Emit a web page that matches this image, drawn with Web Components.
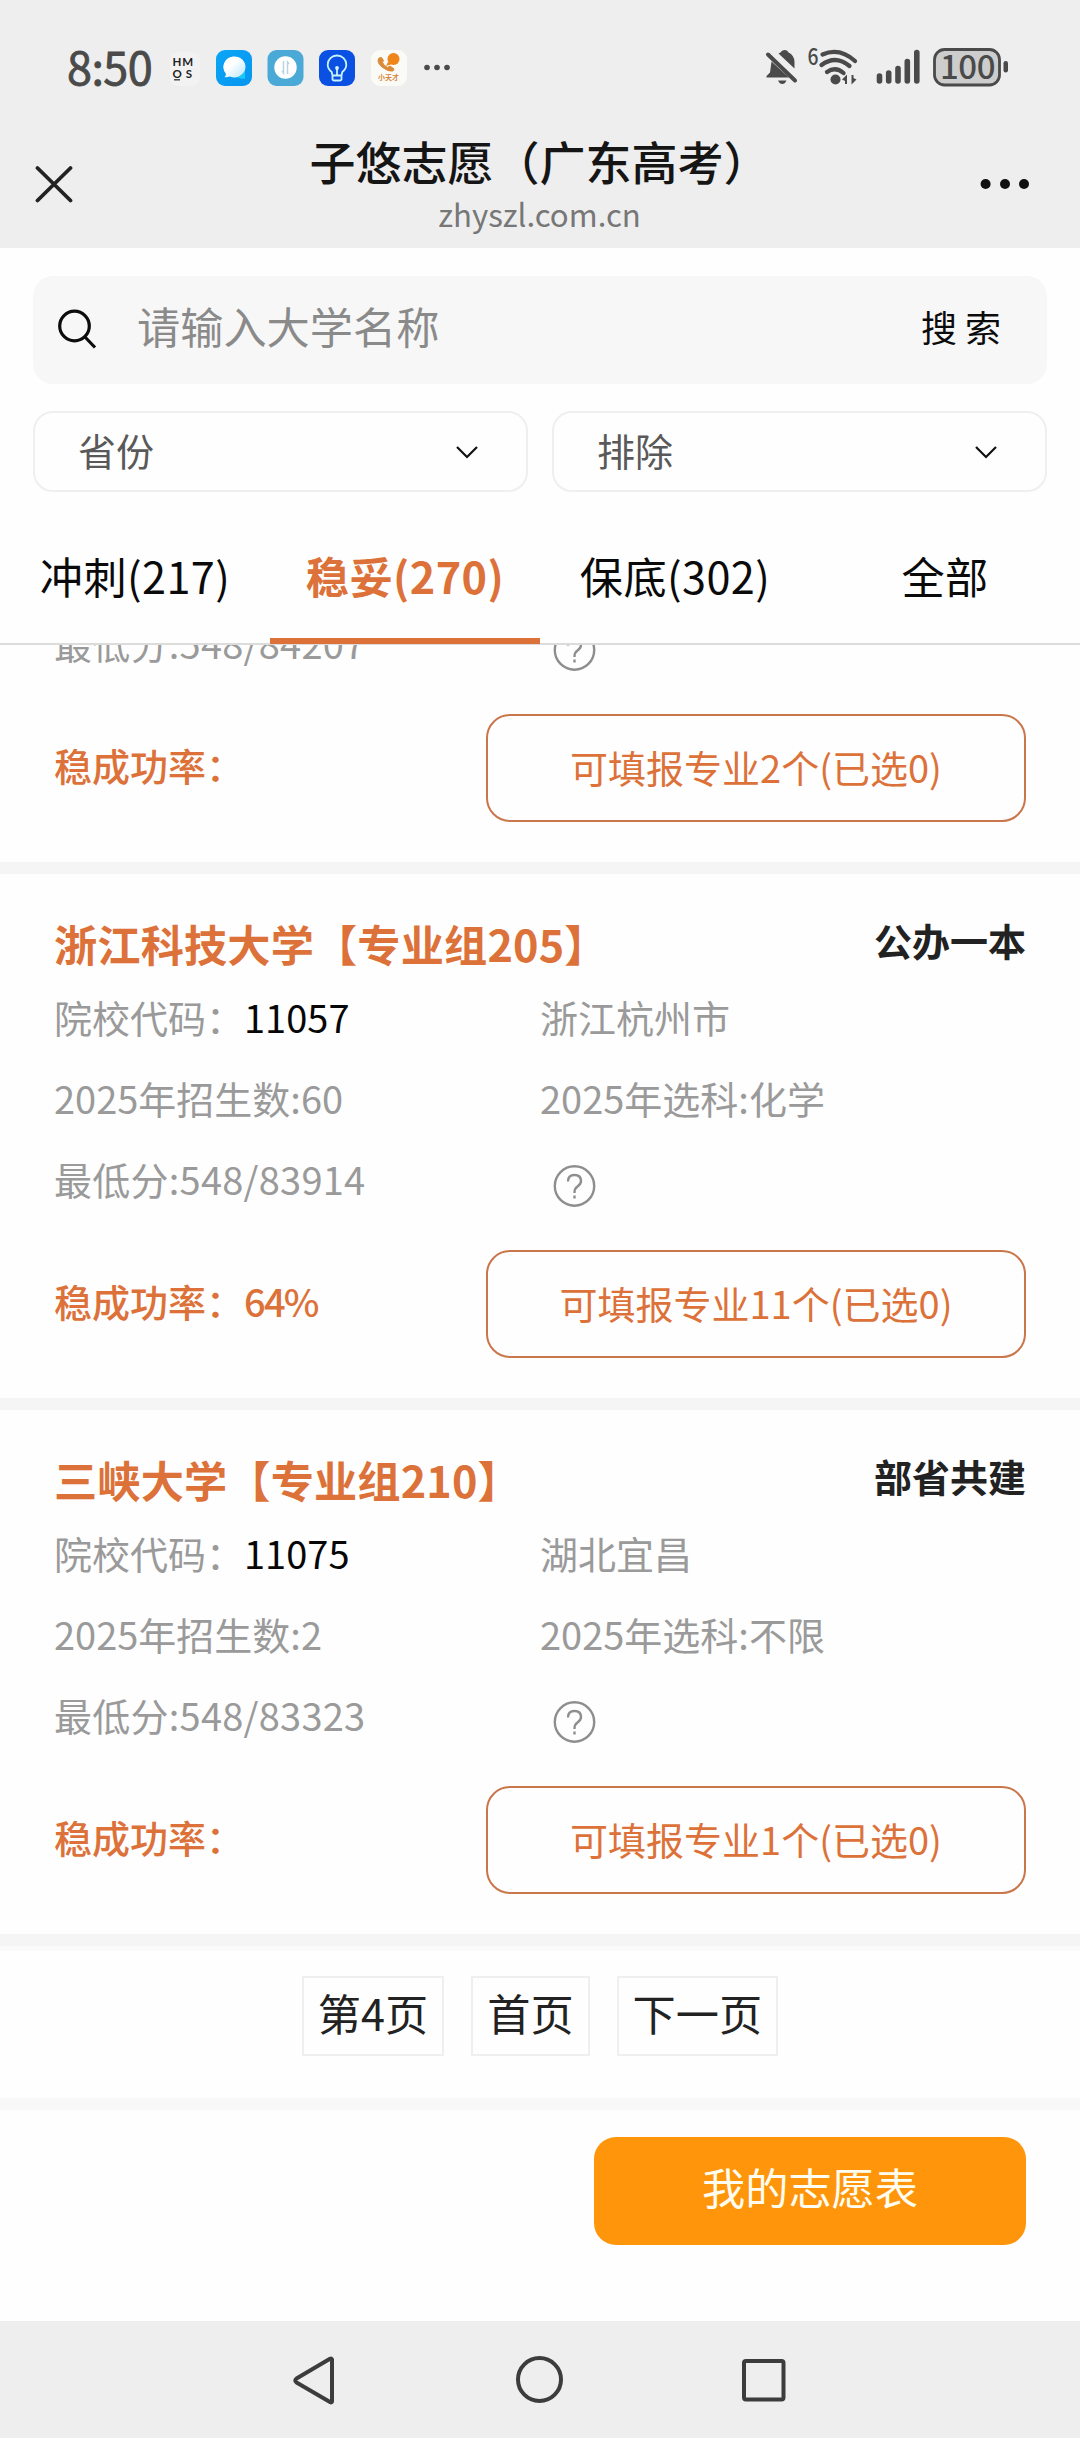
<!DOCTYPE html>
<html lang="zh-CN">
<head>
<meta charset="utf-8">
<title>子悠志愿（广东高考）</title>
<style>
  html, body { margin: 0; padding: 0; }
  body {
    width: 1080px; height: 2438px; overflow: hidden; background: #fefefe;
    font-family: "Noto Sans CJK SC", sans-serif;
    --orange: #dc7239; --edge: #c9764b;
  }
</style>
</head>
<body>
<volunteer-app></volunteer-app>

<script>
const define = (name, html, setup) => {
  const tpl = document.createElement('template');
  tpl.innerHTML = html;
  customElements.define(name, class extends HTMLElement {
    constructor() {
      super();
      this.attachShadow({ mode: 'open' }).append(tpl.content.cloneNode(true));
    }
    connectedCallback() { if (setup) setup(this, this.shadowRoot); }
  });
};

define('status-bar', `
<style>
  :host { display: flex; align-items: center; height: 136px; box-sizing: border-box; padding: 0 72px 0 67px; color: #4a4a4a; }
  .time { font-size: 45px; line-height: 60px; width: 103px; font-weight: 400; -webkit-text-stroke: .8px #4a4a4a; letter-spacing: -.6px; white-space: nowrap; padding-bottom: 5px; }
  svg { display: block; flex: none; overflow: visible; }
  .grow { flex: 1; }
  text { font-family: "Noto Sans CJK SC", sans-serif; }
</style>
<div class="time">8:50</div>
<svg width="290" height="48" viewBox="170 44 290 48">
  <rect x="170" y="52" width="30" height="34" rx="8" fill="#f2f2f2"/>
  <g font-size="11.500" font-weight="700" fill="#222" style="font-family:Lato,sans-serif">
    <text x="172.500" y="66" style="font-family:Lato,sans-serif" textLength="20.500">HM</text>
    <text x="172.500" y="77.800" style="font-family:Lato,sans-serif" textLength="19.500">OS</text>
  </g>
  <path d="M174 79.800h6" stroke="#333" stroke-width="1.300"/>
  <defs>
    <linearGradient id="g" x1="0" y1="0" x2="1" y2="1"><stop offset="0" stop-color="#0aa5f7"/><stop offset="1" stop-color="#0796ee"/></linearGradient>
    <linearGradient id="w" x1="0" y1="0" x2="1" y2="1"><stop offset=".4" stop-color="#fff"/><stop offset="1" stop-color="#b6e6fb"/></linearGradient>
  </defs>
  <rect x="216" y="50" width="36" height="36" rx="9" fill="url(#g)"/>
  <path d="M236 77q8-1 9-8v9.500q-4 1-9-1.500z" fill="#17c9f5"/>
  <path d="M233 56.500a11 10.500 0 1 1 -3 20q-3 1-5.500 .6q2-1.500 1.300-3.600a11 10.500 0 0 1 7.200-17z" fill="url(#w)"/>
  <rect x="267.500" y="50" width="36" height="36" rx="9" fill="#4aa9d6"/>
  <circle cx="285.500" cy="67.500" r="11.200" fill="#fff"/>
  <path d="M283.500 61v12l-1.500-2M287.500 74V62l1.500 2" fill="none" stroke="#b9d4df" stroke-width="1.500"/>
  <rect x="319" y="50" width="36" height="36" rx="9" fill="#0a50e2"/>
  <path d="M332.500 75.500l-.8-3.500q-4-3.200-4-7.500a9.300 9 0 0 1 18.600 0q0 4.300-4 7.500l-.8 3.500zM332.500 76v3.500q.5 1 1.500 1h6q1 0 1.500-1V76M337 75v-8" fill="none" stroke="#c9f2ff" stroke-width="1.800" stroke-linejoin="round"/>
  <circle cx="337" cy="68" r="1.900" fill="#d9f6ff"/>
  <rect x="371" y="50" width="36" height="36" rx="9" fill="#fafaf6"/>
  <circle cx="393.500" cy="59" r="6" fill="#f08519"/>
  <path d="M388 62l-2 4 6-2z" fill="#f08519"/>
  <path d="M379 58q-3 4 3 9t11 4l1-2-4-3-2.500 1.500q-4-2-5-5l1-2-2-3z" fill="#db8a3a" stroke="#db8a3a" stroke-width="1"/>
  <text x="388.500" y="80.300" font-size="7" font-weight="700" text-anchor="middle" fill="#d9863c">小天才</text>
  <g fill="#4a4a4a"><circle cx="427" cy="67.500" r="2.800"/><circle cx="437" cy="67.500" r="2.800"/><circle cx="447" cy="67.500" r="2.800"/></g>
</svg>
<div class="grow"></div>
<svg width="246" height="48" viewBox="762 44 246 48" fill="#4a4a4a">
  <path d="M771.500 61.500L789 77.500H766.500v-1.500l3.500-3.500zM778.500 53.500l2-1q1-2.500 4-2.500 3 0 3.800 2.300 6.200 3.200 6.200 9.700v6.500zM778 80.500h8.500q-1.500 3.500-4.200 3.500t-4.300-3.500z"/>
  <path d="M768 54.500l27 26" stroke="#4a4a4a" stroke-width="4" stroke-linecap="round"/>
  <text x="807.500" y="65" font-size="23" font-weight="500" textLength="11" lengthAdjust="spacingAndGlyphs">6</text>
  <g fill="none" stroke="#4a4a4a" stroke-width="4.300" stroke-linecap="round">
    <path d="M822.500 54.500q17-7.500 32.500 6.500"/><path d="M821.500 65q14-10.500 28 1"/><path d="M827 72q8.500-6 16.500 1"/>
  </g>
  <circle cx="835.500" cy="79.500" r="5"/>
  <path d="M842 79.500l5-5v9.500h-2v-3zM856.500 79.500l-5 5V75h2v3z"/>
  <g stroke="#4a4a4a" stroke-width="5.600" stroke-linecap="round"><path d="M879.500 76v5M888.700 73v8M898 68.500v12.500M907.300 61.500V81M916.800 52.500V81"/></g>
  <rect x="934.500" y="49.500" width="65" height="35.500" rx="10" fill="#cdcdcd" stroke="#4a4a4a" stroke-width="2.800"/>
  <text x="967.500" y="79" font-size="33" font-weight="500" text-anchor="middle" letter-spacing="-.5">100</text>
  <rect x="1003.500" y="61" width="4.500" height="11.500" rx="2.200"/>
</svg>`);

define('page-header', `
<style>
  :host { display: flex; align-items: flex-start; justify-content: space-between; height: 112px; padding: 0 36px 0 35px; box-sizing: border-box; }
  .mid { display: flex; flex-direction: column; align-items: center; }
  h1 { margin: -3px 0 0; font-size: 46px; font-weight: 500; line-height: 54px; color: #151515; height: 57px; white-space: nowrap; }
  p { margin: 0; font-size: 31.200px; line-height: 48px; color: #777; }
  svg { display: block; }
</style>
<svg width="64" height="112" viewBox="35 136 64 112"><path d="M37.500 168l33 32.500M70.500 168l-33 32.500" stroke="#222" stroke-width="3.800" stroke-linecap="round"/></svg>
<div class="mid"><h1><slot name="title"></slot></h1><p><slot name="host"></slot></p></div>
<svg width="64" height="112" viewBox="980 136 64 112" fill="#111"><circle cx="985.600" cy="184" r="5"/><circle cx="1005" cy="184" r="5"/><circle cx="1024" cy="184" r="5"/></svg>`);

define('search-box', `
<style>
  :host { display: flex; align-items: center; height: 108px; border-radius: 20px; background: #f7f7f7; padding: 0 46px 0 25px; box-sizing: border-box; }
  svg { display: block; margin-right: 40px; }
  .ph { flex: 1; font-size: 43.200px; line-height: 60px; color: #8a8a8a; padding-bottom: 10px; }
  .go { font-size: 36px; letter-spacing: 8px; margin-right: -8px; color: #0c0c0c; line-height: 60px; padding-bottom: 9px; }
</style>
<svg width="39" height="44" viewBox="58 308 39 44"><g fill="none" stroke="#0c0c0c" stroke-width="3.200"><circle cx="74.500" cy="326" r="14.800"/><path d="M85 337l10 10.500"/></g></svg>
<div class="ph"><slot></slot></div><div class="go">搜索</div>`);

define('select-box', `
<style>
  :host { display: flex; flex: 1; align-items: center; justify-content: space-between; height: 81px; box-sizing: border-box; border: 2px solid #efefef; border-radius: 20px; padding: 0 47px 0 43px; font-size: 38px; line-height: 56px; color: #595959; }
  span { padding-bottom: 3px; }
</style>
<span><slot></slot></span>
<svg width="24" height="16" viewBox="0 0 24 16"><path d="M2 3l10 10 10-10" fill="none" stroke="#111" stroke-width="2.200"/></svg>`);

define('tab-bar', `
<style>
  :host { display: flex; height: 133px; box-sizing: border-box; border-bottom: 2px solid #dcdcda; }
</style><slot></slot>`);

define('tab-item', `
<style>
  :host { flex: 1; display: flex; justify-content: center; height: 132px; box-sizing: border-box; padding-top: 34px; font-size: 43.200px; letter-spacing: .4px; line-height: 58px; color: #0a0a0a; border-bottom: 6px solid transparent; }
  :host([active]) { color: var(--orange); font-weight: 700; border-bottom-color: var(--orange); }
</style><slot></slot>`);

define('college-card', `
<style>
  :host { display: block; padding: 39px 54px 40px; border-bottom: 12px solid #f5f5f5; font-size: 38px; color: #9a9a9a; }
  :host(:not([name])) { padding-top: 0; margin-top: -43px; }
  .head { display: flex; justify-content: space-between; height: 63px; line-height: 60px; font-weight: 700; }
  .name { font-size: 43.200px; letter-spacing: .15px; color: var(--orange); white-space: nowrap; }
  .tag { color: #222; line-height: 54px; }
  .row { display: grid; grid-template-columns: 486px 1fr; height: 81px; line-height: 81px; white-space: nowrap; }
  .row b { font-weight: 400; color: #060606; }
  .row .score { letter-spacing: .25px; }
  .row svg { display: block; margin: 26px 0 0 13px; }
  .foot { display: flex; align-items: center; justify-content: space-between; margin-top: 31px; color: var(--orange); }
  .rate { font-weight: 500; line-height: 56px; padding-bottom: 6px; }
  .rate i { font-style: normal; letter-spacing: -1.800px; }
  .btn { width: 540px; height: 108px; box-sizing: border-box; border: 2px solid var(--edge); border-radius: 24px; text-align: center; line-height: 102px; }
</style>
<div class="head"><span class="name"></span><span class="tag"></span></div>
<div class="row opt"><span>院校代码：<b class="code"></b></span><span class="place"></span></div>
<div class="row opt"><span class="plan"></span><span class="subject"></span></div>
<div class="row"><span class="score"></span><svg width="44" height="44" viewBox="0 0 44 44" fill="none" stroke="#8e8e8e" stroke-width="2.400"><circle cx="21.500" cy="22" r="19.700"/><path d="M15 17.500q0-6.500 6.500-6.500t6.500 6q0 3-3.500 5.500-3 2-3 6v.5"/><path d="M21.500 31.500v3"/></svg></div>
<div class="foot"><span class="rate">稳成功率：<i class="percent"></i></span><span class="btn"></span></div>`,
(el, root) => {
  const put = (cls, text) => { root.querySelector('.' + cls).textContent = text; };
  const at = k => el.getAttribute(k) || '';
  put('score', '最低分:' + at('score'));
  put('percent', at('rate'));
  put('btn', `可填报专业${at('majors')}个(已选0)`);
  if (!el.hasAttribute('name')) {
    root.querySelectorAll('.head, .opt').forEach(n => n.remove());
    return;
  }
  put('name', at('name'));
  put('tag', at('tag'));
  put('code', at('code'));
  put('place', at('place'));
  put('plan', '2025年招生数:' + at('plan'));
  put('subject', '2025年选科:' + at('subject'));
});

define('page-button', `
<style>
  :host { display: block; height: 80px; box-sizing: border-box; border: 2px solid #efefef; padding: 0 14px; font-size: 43.200px; line-height: 69px; color: #222; white-space: nowrap; }
</style><slot></slot>`);

define('page-nav', `
<style>
  :host { display: flex; justify-content: center; gap: 27px; height: 164px; box-sizing: border-box; padding-top: 25px; border-top: 5px solid #fafafa; border-bottom: 12px solid #f8f8f8; }
</style><slot></slot>`);

define('bottom-action', `
<style>
  :host { display: flex; justify-content: flex-end; height: 211px; box-sizing: border-box; padding: 27px 54px 0; }
  div { width: 432px; height: 108px; border-radius: 22px; background: #ff950a; color: #fffdf0; font-size: 43.200px; line-height: 98px; text-align: center; }
</style><div><slot></slot></div>`);

define('system-nav', `
<style>
  :host { display: flex; justify-content: center; height: 117px; background: #eee; }
  svg { display: block; }
</style>
<svg width="500" height="117" viewBox="290 2321 500 117" fill="none" stroke="#3c3c3c" stroke-width="4" stroke-linejoin="round">
  <path d="M332 2359.500v42q-.3 1.500-2 .5l-33.500-19.500q-2.500-2 0-4l33.500-19.700q1.700-.8 2 .7z"/>
  <circle cx="539.500" cy="2379.500" r="21.500"/>
  <rect x="744" y="2361" width="39.500" height="38.500" rx="2"/>
</svg>`);

define('volunteer-app', `
<style>
  :host { display: flex; flex-direction: column; width: 1080px; height: 2438px; overflow: hidden; background: #fefefe; }
  .top { background: #eee; height: 248px; }
  .filters { display: flex; flex-direction: column; gap: 27px; padding: 28px 33px 20px; }
  .selects { display: flex; gap: 24px; }
  .list { overflow: hidden; height: 1301px; }
</style>
<div class="top">
  <status-bar></status-bar>
  <page-header><span slot="title">子悠志愿（广东高考）</span><span slot="host">zhyszl.com.cn</span></page-header>
</div>
<div class="filters">
  <search-box>请输入大学名称</search-box>
  <div class="selects"><select-box>省份</select-box><select-box>排除</select-box></div>
</div>
<tab-bar>
  <tab-item>冲刺(217)</tab-item><tab-item active>稳妥(270)</tab-item><tab-item>保底(302)</tab-item><tab-item>全部</tab-item>
</tab-bar>
<div class="list">
  <college-card score="548/84207" majors="2"></college-card>
  <college-card name="浙江科技大学【专业组205】" tag="公办一本" code="11057" place="浙江杭州市" plan="60" subject="化学" score="548/83914" rate="64%" majors="11"></college-card>
  <college-card name="三峡大学【专业组210】" tag="部省共建" code="11075" place="湖北宜昌" plan="2" subject="不限" score="548/83323" majors="1"></college-card>
</div>
<page-nav><page-button>第4页</page-button><page-button>首页</page-button><page-button>下一页</page-button></page-nav>
<bottom-action>我的志愿表</bottom-action>
<system-nav></system-nav>`);
</script>
</body>
</html>
